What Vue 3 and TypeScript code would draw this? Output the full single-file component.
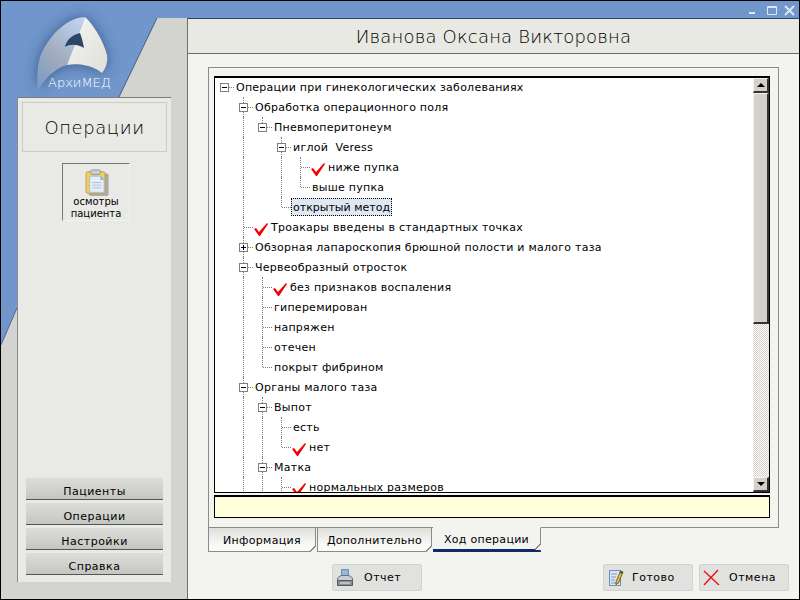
<script setup lang="ts">
interface TreeRow {
  text: string
  guides: number[]
  depth: number
  box?: '-' | '+'
  check?: boolean
  last?: boolean
  selected?: boolean
}

const rows: TreeRow[] = [
  { text: 'Операции при гинекологических заболеваниях', depth: 0, guides: [], box: '-' },
  { text: 'Обработка операционного поля', depth: 1, guides: [], box: '-' },
  { text: 'Пневмоперитонеум', depth: 2, guides: [1], box: '-', last: true },
  { text: 'иглой  Veress', depth: 3, guides: [1], box: '-' },
  { text: 'ниже пупка', depth: 4, guides: [1, 3], check: true },
  { text: 'выше пупка', depth: 4, guides: [1, 3], last: true },
  { text: 'открытый метод', depth: 3, guides: [1], last: true, selected: true },
  { text: 'Троакары введены в стандартных точках', depth: 1, guides: [], check: true },
  { text: 'Обзорная лапароскопия брюшной полости и малого таза', depth: 1, guides: [], box: '+' },
  { text: 'Червеобразный отросток', depth: 1, guides: [], box: '-' },
  { text: 'без признаков воспаления', depth: 2, guides: [1], check: true },
  { text: 'гиперемирован', depth: 2, guides: [1] },
  { text: 'напряжен', depth: 2, guides: [1] },
  { text: 'отечен', depth: 2, guides: [1] },
  { text: 'покрыт фибрином', depth: 2, guides: [1], last: true },
  { text: 'Органы малого таза', depth: 1, guides: [], box: '-' },
  { text: 'Выпот', depth: 2, guides: [1], box: '-' },
  { text: 'есть', depth: 3, guides: [1, 2] },
  { text: 'нет', depth: 3, guides: [1, 2], check: true, last: true },
  { text: 'Матка', depth: 2, guides: [1], box: '-' },
  { text: 'нормальных размеров', depth: 3, guides: [1, 2], check: true }
]

const navItems = ['Пациенты', 'Операции', 'Настройки', 'Справка']
const tabs = ['Информация', 'Дополнительно', 'Ход операции']
const activeTab = 2

function cells(row: TreeRow): number[] {
  return Array.from({ length: row.depth }, (_, i) => i)
}
</script>

<template>
  <div class="win">
    <svg class="backdrop" width="800" height="600" viewBox="0 0 800 600" aria-hidden="true">
      <defs>
        <filter id="glow" x="-40%" y="-40%" width="180%" height="180%">
          <feGaussianBlur stdDeviation="7" />
        </filter>
        <linearGradient id="wingL" x1="0.8" y1="0" x2="0.2" y2="1">
          <stop offset="0" stop-color="#bcd2f0" />
          <stop offset="0.55" stop-color="#a3acbd" />
          <stop offset="1" stop-color="#7f9cc8" />
        </linearGradient>
        <linearGradient id="wingR" x1="0" y1="0" x2="1" y2="1">
          <stop offset="0" stop-color="#f6f6f3" />
          <stop offset="1" stop-color="#dededa" />
        </linearGradient>
      </defs>
      <polygon points="0,0 800,0 800,18 157,18 119,97 17,97 17,308 1,345 0,345" fill="#7096cb" />
      <path d="M157 18 L119 97" stroke="#4a5f80" stroke-width="1" fill="none" />
      <path d="M1 345 L17 308" stroke="#4a6a9c" stroke-width="1" fill="none" />
      <path d="M85 17 C70 17 50 32 40 57 C37 67 37 80 38 91 C43 80 55 68 67 65 C78 63 92 65 102 73 C106 68 108 62 107 55 C103 40 93 24 85 17 Z" fill="#2f4c7c" opacity="0.8" filter="url(#glow)" />
      <path d="M85 17 C70 17 50 32 40 57 C37 67 37 80 38 91 C43 80 55 68 67 65 Z" fill="url(#wingL)" />
      <path d="M85 17 L67 65 C78 63 92 65 102 73 C106 68 108 62 107 55 C103 40 93 24 85 17 Z" fill="url(#wingR)" />
      <path d="M65 47 C66 41 71 35 80 33 C82 38 83 43 84 48 C77 44 70 44 65 47 Z" fill="#2c4568" />
      <text x="48" y="87" class="logo-text">АрхиМЕД</text>
    </svg>

    <div class="titlebar">
      <svg width="52" height="14" viewBox="0 0 52 14" class="controls" aria-hidden="true">
        <rect x="2" y="9" width="6" height="2" fill="#dfe7f2" />
        <path d="M20.5 3.5 H29.5 V11.5 H20.5 Z M20.5 4.5 H29.5" stroke="#dfe7f2" fill="none" />
        <path d="M38 3 L47 12 M47 3 L38 12" stroke="#dfe7f2" stroke-width="2" fill="none" />
      </svg>
    </div>

    <div class="body">
      <aside class="aside">
        <div class="side-panel">
          <div class="side-title">Операции</div>
          <div class="side-item">
            <svg width="32" height="30" viewBox="0 0 32 30" aria-hidden="true">
              <rect x="8" y="5" width="22" height="25" rx="2" fill="#77777a" opacity="0.55" />
              <rect x="5" y="3" width="21" height="24" rx="2" fill="#f3cd63" stroke="#c79a2e" />
              <rect x="10" y="1" width="11" height="5" rx="2" fill="#c9cfd6" stroke="#8792a0" />
              <path d="M9 8 H21 L25 12 V26 H9 Z" fill="#e6edf7" stroke="#a8bad1" />
              <path d="M21 8 V12 H25 Z" fill="#7ea2d6" />
              <path d="M12 15 H22 M12 18 H22 M12 21 H22" stroke="#a9bcd6" />
            </svg>
            <span>осмотры<br />пациента</span>
          </div>
          <nav class="side-nav">
            <button v-for="item in navItems" :key="item" class="nav-btn" type="button">{{ item }}</button>
          </nav>
        </div>
      </aside>

      <main class="main">
        <header class="header">Иванова Оксана Викторовна</header>
        <div class="content">
          <div class="frame">
            <div class="tree-box">
              <div class="tree">
                <div v-for="(row, r) in rows" :key="r" class="row">
                  <span
                    v-for="c in cells(row)"
                    :key="c"
                    class="cell"
                    :class="{ pass: row.guides.includes(c) }"
                  ></span>
                  <span class="cell node" :class="{ first: r === 0, end: row.last }">
                    <span v-if="row.box" class="box">
                      <i class="minus"></i>
                      <i v-if="row.box === '+'" class="plus"></i>
                    </span>
                  </span>
                  <svg v-if="row.check" class="check" width="14" height="14" viewBox="0 0 14 14" aria-hidden="true">
                    <polygon points="0,6 2,5 5,9 13,0 14,1 6,13 5,13" fill="#f00000" />
                  </svg>
                  <span class="label" :class="{ selected: row.selected, checked: row.check }">{{ row.text }}</span>
                </div>
              </div>
              <div class="scrollbar">
                <div class="sb-btn"><i class="arrow up"></i></div>
                <div class="sb-thumb"></div>
                <div class="sb-track"></div>
                <div class="sb-btn"><i class="arrow down"></i></div>
              </div>
            </div>
            <div class="note"></div>
          </div>

          <div class="tabs">
            <div
              v-for="(tab, t) in tabs"
              :key="tab"
              class="tab"
              :class="{ active: t === activeTab }"
            >{{ tab }}</div>
          </div>

          <div class="actions">
            <button class="action" type="button">
              <svg width="22" height="22" viewBox="0 0 22 22" aria-hidden="true">
                <path d="M5.5 2.5 H12.5 V9 H5.5 Z" fill="#8fb8dc" stroke="#6a92b8" />
                <path d="M1.5 11 L5 8.5 H13 L16.5 11 V15 H1.5 Z" fill="#c9ccd0" stroke="#70757c" />
                <path d="M1.5 13.5 H16.5 V18.5 H1.5 Z" fill="#8b9096" stroke="#555a60" />
                <path d="M4 16 H14" stroke="#f2f2f2" />
              </svg>
              <span>Отчет</span>
            </button>
            <div class="actions-right">
              <button class="action" type="button">
                <svg width="19" height="19" viewBox="0 0 19 19" aria-hidden="true">
                  <rect x="2.5" y="2.5" width="11" height="15" fill="#d9e6f5" stroke="#6f8fb8" />
                  <path d="M4 6 H10 M4 9 H9 M4 12 H8 M4 15 H11" stroke="#8199b8" />
                  <path d="M9 14 L13.5 3 L16 4 L11.5 15 L9 16.5 Z" fill="#f0c020" stroke="#40351a" stroke-width="0.7" />
                  <path d="M13.5 3 L16 4 L15.2 6 L12.7 5 Z" fill="#2f6b2f" />
                </svg>
                <span>Готово</span>
              </button>
              <button class="action" type="button">
                <svg width="20" height="18" viewBox="0 0 20 18" aria-hidden="true">
                  <path d="M1 2 L16 16 M15 1 L1 16" stroke="#f01010" stroke-width="1.4" fill="none" />
                </svg>
                <span>Отмена</span>
              </button>
            </div>
          </div>
        </div>
      </main>
    </div>
  </div>
</template>

<style>
html, body { margin: 0; padding: 0; }
</style>

<style scoped>
.win {
  position: relative;
  width: 800px;
  height: 600px;
  box-sizing: border-box;
  border: 1px solid #000;
  background: #d3d4cf;
  display: flex;
  flex-direction: column;
  overflow: hidden;
  font-family: "DejaVu Sans", sans-serif;
  font-size: 11px;
  color: #000;
}
.backdrop { position: absolute; left: -1px; top: -1px; }
.logo-text { font: 200 13px "DejaVu Sans", sans-serif; fill: #fff; }
.titlebar {
  position: relative;
  height: 17px;
  display: flex;
  justify-content: flex-end;
  align-items: flex-start;
  flex: none;
}
.controls { margin: 2px 0 0 0; }
.body { position: relative; flex: 1; display: flex; min-height: 0; }
.aside { width: 186px; flex: none; padding: 79px 0 0 16px; box-sizing: border-box; }
.side-panel {
  width: 154px;
  height: 485px;
  box-sizing: border-box;
  border-top: 1px solid #7b7b78;
  border-left: 1px solid #8a8a87;
  background: #e9eae5;
  display: flex;
  flex-direction: column;
  align-items: flex-start;
  padding: 4px 4px 7px 4px;
}
.side-title {
  width: 145px;
  height: 50px;
  box-sizing: border-box;
  border: 1px solid #cbccc7;
  display: flex;
  align-items: center;
  justify-content: center;
  font-size: 18px;
  font-weight: 200;
  letter-spacing: 0.6px;
}
.side-item {
  margin: 11px 0 0 40px;
  width: 68px;
  height: 58px;
  box-sizing: border-box;
  border: 1px solid #f2f3ee;
  border-top-color: #777;
  border-left-color: #777;
  display: flex;
  flex-direction: column;
  align-items: center;
  padding-top: 5px;
  font-size: 10px;
  line-height: 12px;
  text-align: center;
}
.side-nav {
  margin: auto 0 0 4px;
  display: flex;
  flex-direction: column;
  gap: 3px;
}
.nav-btn {
  width: 137px;
  height: 22px;
  padding: 5px 0 0;
  border: 0;
  border-bottom: 1px solid #555;
  background: linear-gradient(#dcddd8, #cdcec9 70%, #c4c5c0);
  font: 11px "DejaVu Sans", sans-serif;
  letter-spacing: 0.5px;
  color: #000;
}
.main {
  flex: 1;
  min-width: 0;
  display: flex;
  flex-direction: column;
  border-left: 1px solid #6f6f6c;
  border-top: 1px solid #33435f;
  background: #f3f4ef;
}
.header {
  height: 34px;
  flex: none;
  box-sizing: content-box;
  background: #e8e9e3;
  border-bottom: 1px solid #6b6b68;
  display: flex;
  align-items: center;
  justify-content: center;
  font-size: 18px;
  font-weight: 200;
  letter-spacing: 0.2px;
}
.content { flex: 1; display: flex; flex-direction: column; min-height: 0; padding: 13px 0 0 20px; }
.frame {
  width: 571px;
  height: 461px;
  box-sizing: border-box;
  border: 1px solid #8a8a87;
  padding: 8px 8px 8px 5px;
  display: flex;
  flex-direction: column;
  flex: none;
}
.tree-box {
  height: 417px;
  box-sizing: border-box;
  border: 1px solid #000;
  box-shadow: inset 0 1px 0 #000;
  background: #fff;
  display: flex;
  flex: none;
}
.tree { flex: 1; min-width: 0; overflow: hidden; padding-left: 0; }
.row { display: flex; align-items: center; height: 20px; white-space: pre; letter-spacing: 0.25px; }
.cell { position: relative; width: 19px; height: 20px; flex: none; }
.pass::before, .node::before {
  content: "";
  position: absolute;
  left: 9px;
  top: 0;
  bottom: 0;
  border-left: 1px dotted #808080;
}
.node::after {
  content: "";
  position: absolute;
  left: 10px;
  width: 9px;
  top: 10px;
  border-top: 1px dotted #808080;
}
.node.end::before { bottom: 10px; }
.node.first::before { display: none; }
.box {
  position: absolute;
  z-index: 1;
  left: 5px;
  top: 6px;
  width: 9px;
  height: 9px;
  box-sizing: border-box;
  border: 1px solid #808080;
  background: #fff;
}
.minus { position: absolute; left: 1px; top: 3px; width: 5px; height: 1px; background: #000; }
.plus { position: absolute; left: 3px; top: 1px; width: 1px; height: 5px; background: #000; }
.check { flex: none; margin: 6px 3px 0 1px; align-self: flex-start; }
.label { margin-left: 2px; }
.label.checked { margin-left: 0; }
.label.selected {
  margin-left: 0;
  padding: 0 1px;
  height: 18px;
  line-height: 17px;
  box-sizing: border-box;
  border: 1px dotted #000;
  background: #dfe7f2;
  letter-spacing: 0;
}
.scrollbar {
  width: 16px;
  flex: none;
  display: flex;
  flex-direction: column;
  margin-top: 1px;
}
.sb-btn {
  height: 15px;
  flex: none;
  box-sizing: border-box;
  background: #d4d0c8;
  border: 1px solid #f3f3ef;
  border-right: 2px solid #333;
  border-bottom: 2px solid #333;
  display: flex;
  align-items: center;
  justify-content: center;
}
.arrow { width: 0; height: 0; border-left: 4px solid transparent; border-right: 4px solid transparent; }
.arrow.up { border-bottom: 4px solid #000; }
.arrow.down { border-top: 4px solid #000; }
.sb-thumb {
  height: 231px;
  flex: none;
  box-sizing: border-box;
  background: #d4d0c8;
  border: 1px solid #f3f3ef;
  border-right: 2px solid #333;
  border-bottom: 2px solid #333;
}
.sb-track {
  flex: 1;
  background: repeating-conic-gradient(#d4d0c8 0 25%, #fff 0 50%) 0 0 / 2px 2px;
}
.note {
  margin-top: 2px;
  height: 23px;
  box-sizing: border-box;
  border: 1px solid #000;
  border-top-width: 2px;
  background: #ffffdc;
  flex: none;
}
.tabs { display: flex; gap: 1px; margin-top: -1px; position: relative; flex: none; }
.tab {
  position: relative;
  width: 108px;
  height: 25px;
  padding-top: 2px;
  box-sizing: border-box;
  border: 1px solid #8a8a87;
  background: linear-gradient(#dfe0db, #fafaf8 75%);
  display: flex;
  align-items: center;
  justify-content: center;
  letter-spacing: 0.3px;
}
.tab:nth-child(2) { width: 115px; }
.tab::after {
  content: "";
  position: absolute;
  right: -1px;
  bottom: -1px;
  width: 6px;
  height: 6px;
  background: linear-gradient(to top left, #f3f4ef 48%, #8a8a87 48%, #8a8a87 62%, transparent 62%);
}
.tab.active {
  background: #f3f4ef;
  border-top-color: #f3f4ef;
  border-left: 0;
  border-bottom: 3px solid #12296e;
}
.actions { display: flex; margin-top: 12px; padding: 0 10px 0 124px; flex: none; }
.actions-right { display: flex; gap: 6px; margin-left: auto; }
.action {
  width: 90px;
  height: 27px;
  box-sizing: border-box;
  border: 1px solid #d2d2d0;
  border-radius: 2px;
  background: #e1e1df;
  display: flex;
  align-items: center;
  gap: 6px;
  padding: 0 0 0 3px;
  font: 11px "DejaVu Sans", sans-serif;
  letter-spacing: 0.5px;
  color: #000;
}
</style>
